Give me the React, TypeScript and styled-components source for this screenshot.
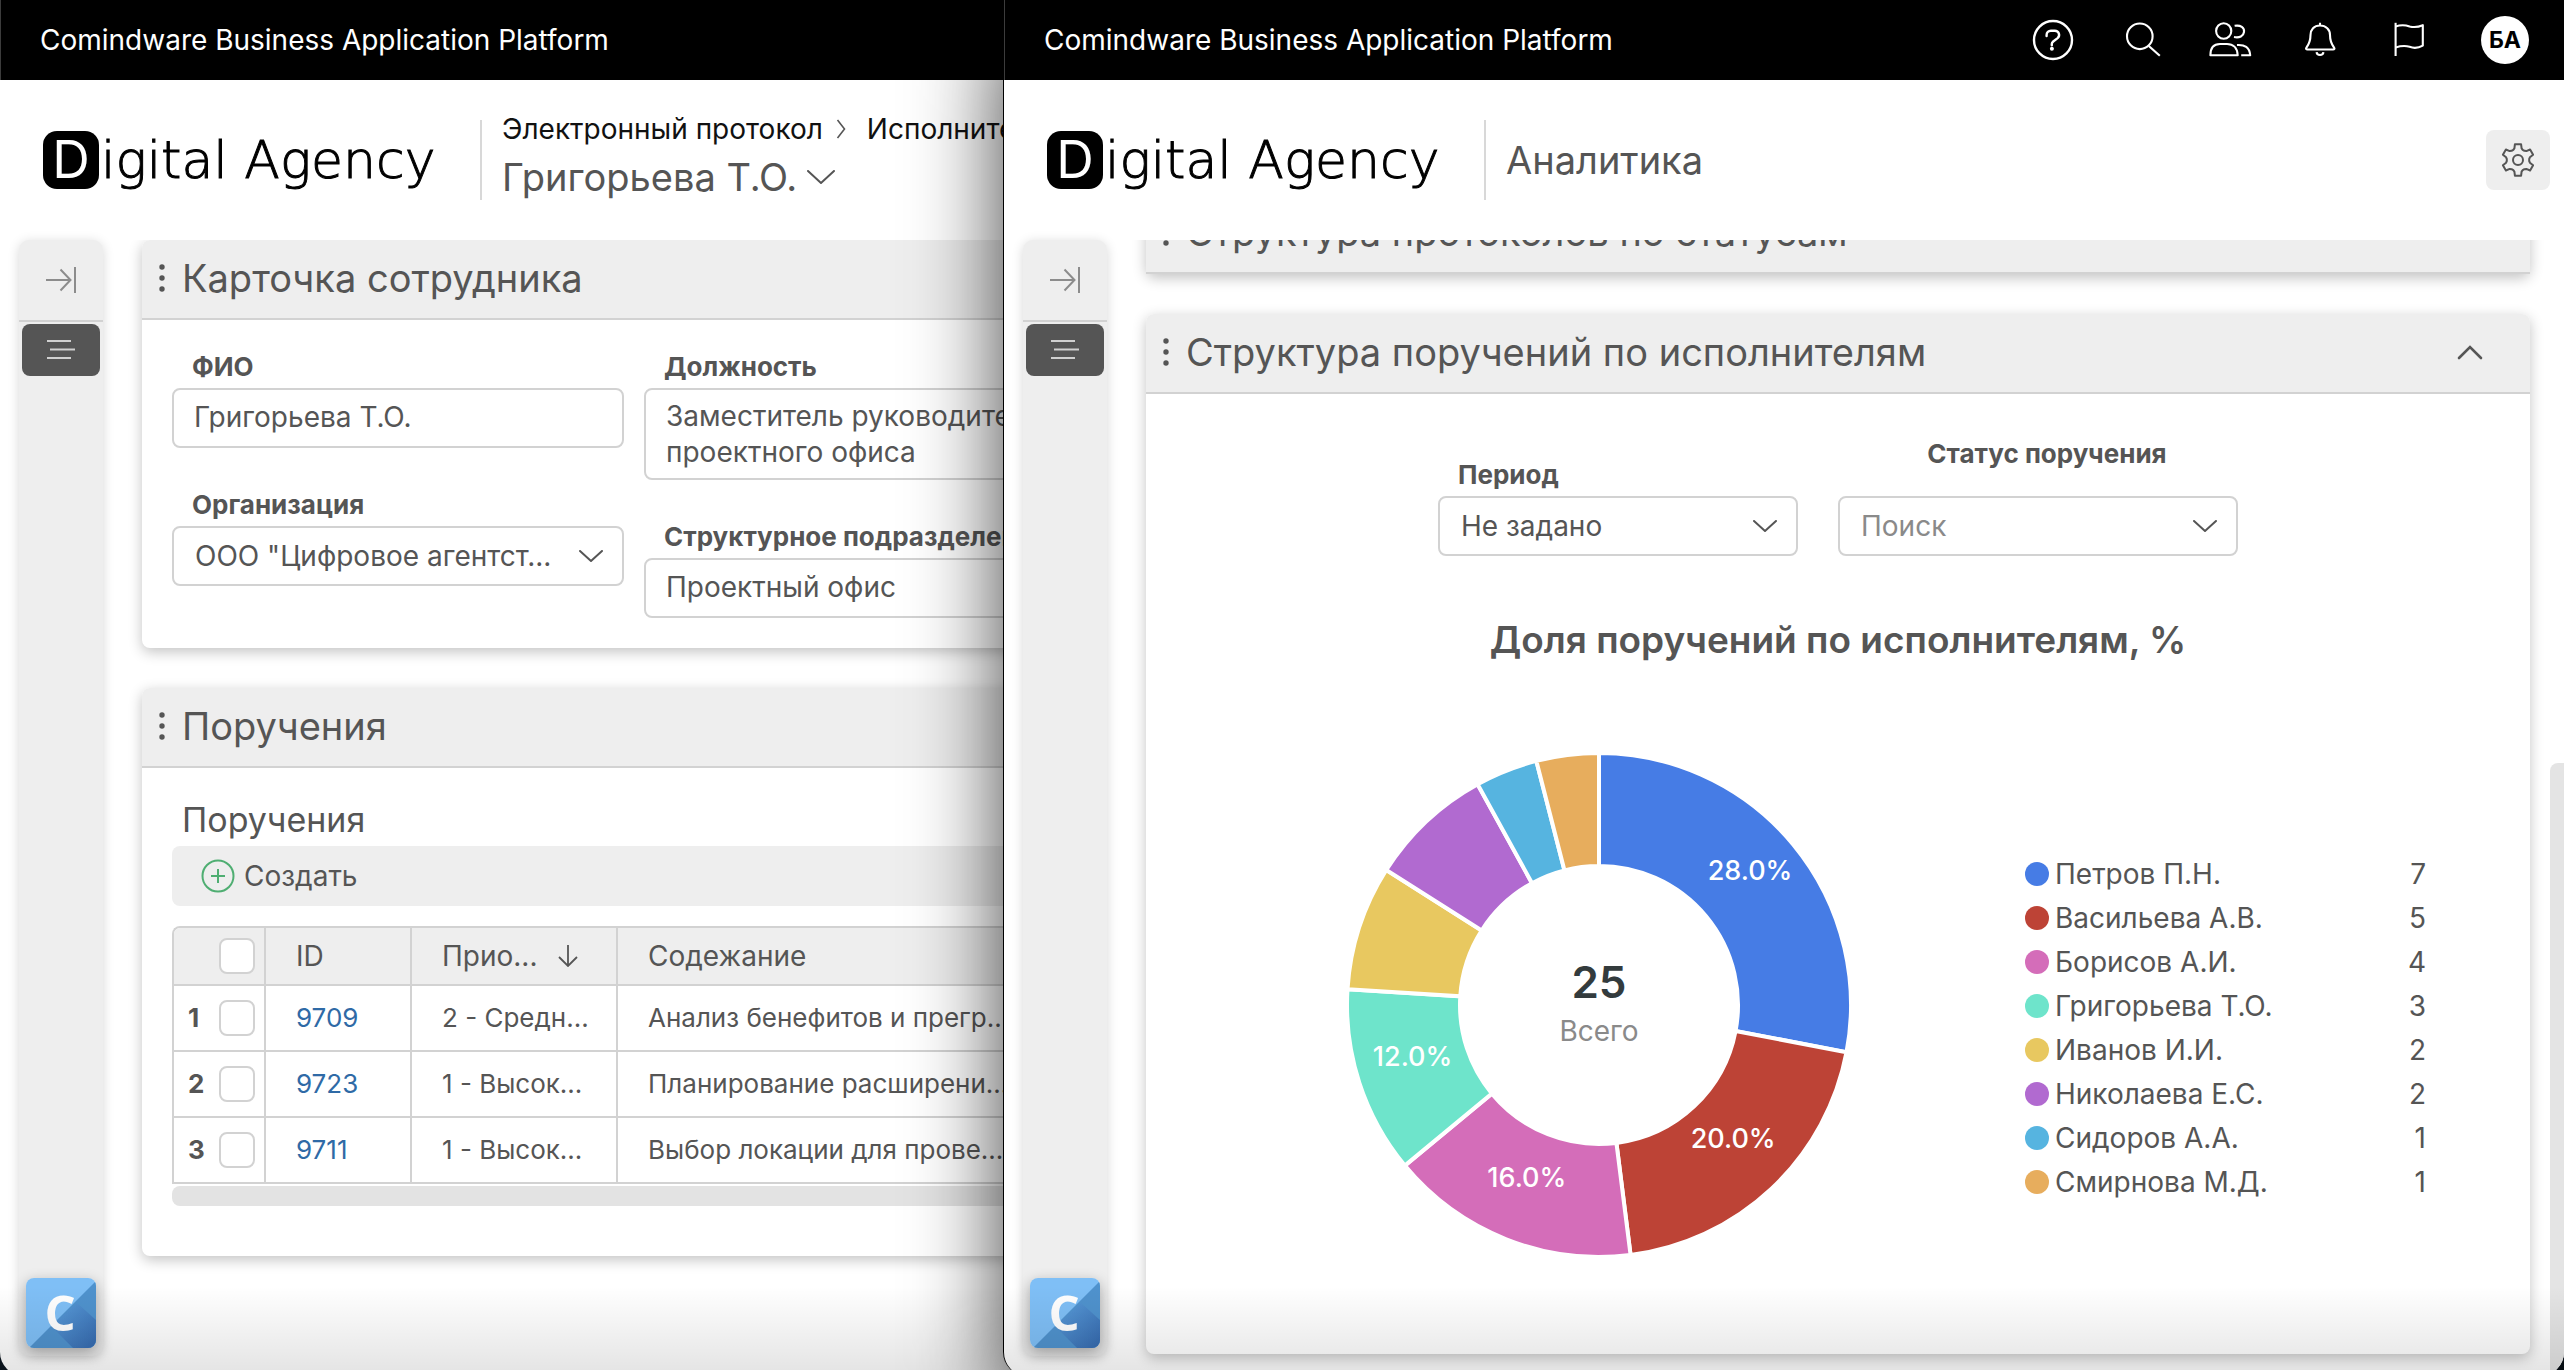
import React, { useId } from 'react';
import styled, { createGlobalStyle, css } from 'styled-components';

/* ---------- theme values ---------- */

const ink = '#555555';
const line = '#d2d2d2';
const panel = '#eeeeee';

const GlobalStyle = createGlobalStyle`
  *, *::before, *::after { box-sizing: border-box; }
  body {
    margin: 0;
    font-family: Inter, "Noto Sans", "Liberation Sans", sans-serif;
    font-size: 28px;
    line-height: 36px;
    color: ${ink};
  }
  h1, h2, h3, p, ul, ol { margin: 0; padding: 0; font-weight: 400; list-style: none; }
  button, input, select, textarea { font: inherit; color: inherit; margin: 0; }
  button { border: 0; padding: 0; background: none; cursor: pointer; }
`;

/* ---------- desktop and windows ---------- */

const Desktop = styled.div`
  position: relative;
  height: 100vh;
  overflow: hidden;
  background: #0b141c;
`;

const Window = styled.section<{ $front?: boolean }>`
  position: absolute;
  top: 0;
  bottom: -6px;
  display: flex;
  flex-direction: column;
  overflow: hidden;
  background: #fff;
  border-radius: 0 0 24px 24px;
  ${({ $front }) =>
    $front
      ? css`
          left: 1003px;
          right: 0;
          border-left: 1px solid #000;
          box-shadow: 0 30px 90px rgba(0, 0, 0, 0.75);
        `
      : css`
          left: 0;
          width: 61%;
        `}

  &::after {
    content: '';
    position: absolute;
    inset: auto 0 0 0;
    height: 90px;
    background: linear-gradient(rgba(0, 0, 0, 0), rgba(0, 0, 0, 0.11));
    pointer-events: none;
  }
`;

const TopBar = styled.header`
  flex: none;
  display: flex;
  align-items: center;
  justify-content: space-between;
  height: 80px;
  padding: 0 35px 0 39px;
  background: #000;
  border-left: 1px solid #3c3c3c;
  color: #fff;
`;

const TopTools = styled.nav`
  display: flex;
  align-items: center;
  gap: 41px;
`;

const ToolButton = styled.button`
  display: block;
  width: 48px;
  height: 48px;
  svg { display: block; }
`;

const Avatar = styled.button`
  width: 48px;
  height: 48px;
  margin-left: 7px;
  border-radius: 50%;
  background: #fff;
  color: #000;
  font-size: 23px;
  font-weight: 700;
`;

const PageHeader = styled.div`
  flex: none;
  display: flex;
  align-items: center;
  height: 160px;
  padding: 0 14px 0 43px;
`;

const Brand = styled.a`
  flex: none;
  display: flex;
  align-items: center;
  gap: 2px;
  width: 437px;
  color: #000;
  text-decoration: none;
`;

const BrandLetter = styled.span`
  display: flex;
  align-items: center;
  justify-content: center;
  width: 56px;
  height: 58px;
  border-radius: 14px;
  background: #000;
  color: #fff;
  font-size: 52px;
  line-height: 56px;
`;

const BrandName = styled.span`
  font-family: "DejaVu Sans", Inter, sans-serif;
  font-weight: 200;
  font-size: 52px;
  line-height: 56px;
  -webkit-text-stroke: 1px #000;
  white-space: nowrap;
`;

const TitleBlock = styled.div<{ $crumbs?: boolean }>`
  flex: 1;
  display: flex;
  flex-direction: column;
  justify-content: center;
  height: 80px;
  padding-left: 20px;
  padding-bottom: ${({ $crumbs }) => ($crumbs ? 6 : 0)}px;
  border-left: 2px solid #d8d8d8;
`;

const Crumbs = styled.nav`
  display: flex;
  align-items: center;
  line-height: 40px;
  white-space: nowrap;
  color: #111;
  a { color: inherit; text-decoration: none; }
  svg { margin: 0 21px 0 13px; }
`;

const PageTitle = styled.h1`
  display: flex;
  align-items: center;
  gap: 10px;
  font-size: 38px;
  line-height: 56px;
`;

const SettingsButton = styled.button`
  display: flex;
  align-items: center;
  justify-content: center;
  width: 64px;
  height: 60px;
  border-radius: 8px;
  background: ${panel};
`;

/* ---------- body ---------- */

const Body = styled.div`
  flex: 1;
  min-height: 0;
  display: flex;
`;

const SideBar = styled.aside`
  flex: none;
  display: flex;
  flex-direction: column;
  align-items: center;
  width: 84px;
  margin: 0 0 20px 19px;
  border-radius: 10px;
  background: ${panel};
  box-shadow: 0 2px 12px rgba(0, 0, 0, 0.16);
`;

const ExpandButton = styled.button`
  width: 100%;
  height: 82px;
  border-bottom: 2px solid ${line};
  svg { display: block; margin: 0 auto; }
`;

const MenuButton = styled.button`
  width: 78px;
  height: 52px;
  margin: 2px 0 auto;
  border-radius: 8px;
  background: ${ink};
  svg { display: block; margin: 0 auto; }
`;

const HomeButton = styled.button`
  width: 70px;
  height: 70px;
  margin-bottom: 8px;
  border-radius: 8px;
  overflow: hidden;
  box-shadow: 0 4px 14px rgba(0, 0, 0, 0.3);
  svg { display: block; }
`;

const Main = styled.main<{ $scrolled?: boolean }>`
  flex: 1;
  min-width: 0;
  overflow: hidden;
  display: flex;
  flex-direction: column;
  gap: 40px;
  padding: 0 20px 0 39px;
  > :first-child { margin-top: ${({ $scrolled }) => ($scrolled ? -46 : 0)}px; }
`;

const ScrollTrack = styled.div`
  flex: none;
  display: flex;
  flex-direction: column;
  justify-content: flex-end;
  width: 14px;
`;

const ScrollThumb = styled.div`
  height: 54%;
  border-radius: 8px 0 0 0;
  background: #e4e4e4;
`;

const Card = styled.section`
  flex: none;
  border-radius: 8px;
  background: #fff;
  box-shadow: 0 4px 14px rgba(0, 0, 0, 0.24);
`;

const CardHead = styled.div`
  display: flex;
  align-items: center;
  gap: 17px;
  height: 80px;
  padding: 0 48px 2px 17px;
  border-bottom: 2px solid ${line};
  border-radius: 8px 8px 0 0;
  background: ${panel};
`;

const CardTitle = styled.h2`
  flex: 1;
  font-size: 38px;
  line-height: 56px;
  white-space: nowrap;
`;

/* ---------- form ---------- */

const FormGrid = styled.div`
  display: grid;
  grid-template-columns: 452px 452px;
  gap: 20px;
  padding: 26px 30px 30px;
`;

const FormColumn = styled.div`
  display: flex;
  flex-direction: column;
  gap: 36px;
`;

const FieldBox = styled.div<{ $width?: number }>`
  display: flex;
  flex-direction: column;
  ${({ $width }) => $width && `width: ${$width}px;`}
`;

const FieldLabel = styled.label<{ $tall?: boolean }>`
  padding-left: ${({ $tall }) => ($tall ? 18 : 20)}px;
  font-size: 26px;
  font-weight: 700;
  line-height: ${({ $tall }) => ($tall ? 84 : 42)}px;
  text-align: ${({ $tall }) => ($tall ? 'center' : 'left')};
  white-space: nowrap;
`;

const control = css`
  display: block;
  width: 100%;
  height: 60px;
  padding: 0 20px 3px;
  border: 2px solid ${line};
  border-radius: 8px;
  background: #fff;
  outline: none;
`;

const TextInput = styled.input`
  ${control}
`;

const TextArea = styled.textarea`
  ${control}
  height: 92px;
  padding: 8px 20px;
  overflow: hidden;
  resize: none;
`;

const SelectWrap = styled.div`
  display: grid;
  align-items: center;
  > * { grid-area: 1 / 1; }
  > svg { justify-self: end; margin-right: 21px; pointer-events: none; }
`;

const Select = styled.select<{ $muted?: boolean }>`
  ${control}
  padding: 0 56px 0 21px;
  appearance: none;
  color: ${({ $muted }) => ($muted ? '#8a8a8a' : ink)};
`;

/* ---------- table ---------- */

const TaskArea = styled.div`
  padding: 34px 30px 50px;
`;

const AreaTitle = styled.h3`
  padding: 0 0 8px 10px;
  font-size: 34px;
  line-height: 36px;
`;

const ActionBar = styled.div`
  display: flex;
  align-items: center;
  height: 60px;
  margin-bottom: 20px;
  padding-left: 29px;
  border-radius: 8px;
  background: ${panel};
`;

const CreateButton = styled.button`
  display: flex;
  align-items: center;
  gap: 9px;
`;

const TableFrame = styled.div`
  overflow: hidden;
  border: 2px solid ${line};
  border-width: 2px 0 0 2px;
  border-radius: 8px 0 0 0;
`;

const Table = styled.table`
  width: 100%;
  table-layout: fixed;
  border-collapse: separate;
  border-spacing: 0;
  font-size: 26px;

  th, td {
    height: 66px;
    padding: 0 0 0 30px;
    border: 2px solid ${line};
    border-width: 0 2px 2px 0;
    font-weight: 400;
    text-align: left;
    white-space: nowrap;
    overflow: hidden;
  }
  thead th {
    height: 58px;
    background: ${panel};
    font-size: 28px;
  }
  a { color: #2f6aa6; text-decoration: none; }
`;

const Col = styled.col<{ $width?: number }>`
  width: ${({ $width }) => ($width ? `${$width}px` : 'auto')};
`;

const SortLabel = styled.span`
  display: flex;
  align-items: center;
  gap: 20px;
`;

const RowMark = styled.div`
  display: flex;
  align-items: center;
  justify-content: space-between;
  margin-left: -16px;
  padding-right: 9px;
  font-weight: 700;
`;

const Check = styled.input`
  appearance: none;
  width: 36px;
  height: 36px;
  margin-left: auto;
  border: 2px solid ${line};
  border-radius: 8px;
  background: #fff;
`;

const HorizontalScroll = styled.div`
  height: 20px;
  margin-top: 2px;
  border-radius: 8px;
  background: #e3e3e3;
`;

/* ---------- analytics ---------- */

const Filters = styled.div`
  display: flex;
  align-items: flex-end;
  justify-content: center;
  gap: 40px;
  padding-top: 18px;
`;

const ChartTitle = styled.h3`
  margin: 60px 0 90px;
  font-size: 37px;
  font-weight: 600;
  line-height: 48px;
  text-align: center;
`;

const ChartRow = styled.div`
  display: flex;
  align-items: flex-start;
  justify-content: center;
  gap: 175px;
  padding: 0 0 98px 98px;
  > svg { display: block; }
`;

const Legend = styled.ul`
  width: 401px;
  margin-top: 98px;
`;

const LegendItem = styled.li`
  display: flex;
  align-items: center;
  gap: 6px;
  line-height: 44px;
  > :last-child { margin-left: auto; }
`;

const Dot = styled.span<{ $color: string }>`
  width: 24px;
  height: 24px;
  border-radius: 50%;
  background: ${({ $color }) => $color};
`;

const SliceLabel = styled.text`
  fill: #fff;
  font-size: 27px;
  font-weight: 500;
  text-anchor: middle;
`;

const TotalValue = styled(SliceLabel)`
  fill: #333b3d;
  font-size: 44px;
  font-weight: 600;
`;

const TotalCaption = styled(SliceLabel)`
  fill: #8a8a8a;
  font-size: 28px;
  font-weight: 400;
`;

/* ---------- icons ---------- */

type IconProps = { width?: number; children: React.ReactNode };

const BarIcon = ({ children, width = 2.1 }: IconProps) => (
  <svg width="48" height="48" viewBox="0 0 48 48" fill="none" stroke="#fff" strokeWidth={width} strokeLinejoin="round">
    {children}
  </svg>
);

const HelpIcon = () => (
  <BarIcon width={2.4}>
    <circle cx="24" cy="24" r="19" />
    <path d="M17.6 20v-1a4.3 4.3 0 0 1 4.3-4.3h4a4.2 4.2 0 0 1 2.7 7.4l-4.4 3.4q-1.4 1.2-1.4 2.6v1.1" strokeLinecap="round" />
    <circle cx="22.9" cy="32.8" r="2" fill="#fff" stroke="none" />
  </BarIcon>
);

const SearchIcon = () => (
  <BarIcon>
    <circle cx="21.8" cy="20.3" r="12.8" />
    <path d="M30.8 30l11 9.8" />
  </BarIcon>
);

const UsersIcon = () => (
  <BarIcon>
    <ellipse cx="16.7" cy="15" rx="7.6" ry="7.8" />
    <path d="M27.6 9.8c6-1 10.1 1.7 9.4 6.2-.5 4-4.5 6.200-10 5" />
    <path d="M3.400 39.300C3.400 31.700 7.200 28 13 28h7c5.900 0 10.400 3.700 10.700 11.300z" />
    <path d="M30 29c7.600-.6 12.600 2.400 13.200 10.300h-9" />
  </BarIcon>
);

const BellIcon = () => (
  <BarIcon>
    <path d="M24 6.800v2.700c-6 0-9.500 4-9.500 9.500 0 6-1 8.500-4 12.500-1 1.200-.3 2 1 2h25.500c1.300 0 2-.8 1-2-3-4-4-6.500-4-12.500 0-5.500-4-9.500-10-9.500" />
    <path d="M20.600 36.200c.3 3.800 6.500 3.800 6.800 0" />
  </BarIcon>
);

const FlagIcon = () => (
  <BarIcon>
    <path d="M10.600 6.800v33.200" />
    <path d="M10.600 10.400c6-2 9.400-1.600 14 0 4.600 1.200 8 1 13.200-1.200v20.400c-5 2.800-8.600 3-13.200 1.200-4.600-1.400-8-1.200-14 .6" />
  </BarIcon>
);

const gearPath = (() => {
  const points: string[] = [];
  for (let tooth = 0; tooth < 6; tooth += 1) {
    const corners: [number, number][] = [[-25, 11.2], [-17, 12.2], [-11, 16], [11, 16], [17, 12.2], [25, 11.2]];
    corners.forEach(([offset, radius]) => {
      const angle = ((tooth * 60 + offset - 90) * Math.PI) / 180;
      points.push(`${(18 + radius * Math.cos(angle)).toFixed(1)} ${(18 + radius * Math.sin(angle)).toFixed(1)}`);
    });
  }
  return `M${points.join('L')}Z`;
})();

const GearIcon = () => (
  <svg width="36" height="36" viewBox="0 0 36 36" fill="none" stroke={ink} strokeWidth="2" strokeLinejoin="round">
    <path d={gearPath} />
    <circle cx="18" cy="18" r="5" />
  </svg>
);

const Chevron = ({ w = 22, h = 10, up, width = 2 }: { w?: number; h?: number; up?: boolean; width?: number }) => (
  <svg width={w + 2} height={h + 2} viewBox={`-1 -1 ${w + 2} ${h + 2}`} fill="none" stroke={ink} strokeWidth={width} strokeLinecap="round">
    <path d={up ? `M0 ${h}L${w / 2} 0L${w} ${h}` : `M0 0L${w / 2} ${h}L${w} 0`} />
  </svg>
);

const FoldButton = styled.button`
  display: block;
  svg { display: block; overflow: visible; }
`;

const CrumbArrow = () => (
  <svg width="10" height="20" viewBox="0 0 10 20" fill="none" stroke={ink} strokeWidth="1.6">
    <path d="M1.5 1L8.5 10L1.5 19" />
  </svg>
);

const ExpandIcon = () => (
  <svg width="32" height="28" viewBox="0 0 32 28" fill="none" stroke="#8c8c8c" strokeWidth="2">
    <path d="M1 14h24M15.5 3.5L25.5 14L15.5 24.5M30 1v26" />
  </svg>
);

const MenuIcon = () => (
  <svg width="30" height="22" viewBox="0 0 30 22" fill="none" stroke="#d0d0d0" strokeWidth="2">
    <path d="M1 2h24M4 10.500h25M1 19h24" />
  </svg>
);

const Grip = () => (
  <svg width="6" height="28" viewBox="0 0 6 28" fill={ink}>
    {[3, 14, 25].map((y) => (
      <circle key={y} cx="3" cy={y} r="2.7" />
    ))}
  </svg>
);

const PlusIcon = () => (
  <svg width="34" height="34" viewBox="0 0 34 34" fill="none" stroke="#4fae72" strokeWidth="2">
    <circle cx="17" cy="17" r="15.5" />
    <path d="M10 17h14M17 10v14" />
  </svg>
);

const SortIcon = () => (
  <svg width="20" height="22" viewBox="0 0 20 22" fill="none" stroke={ink} strokeWidth="1.8">
    <path d="M10 0v20M1 12l9 9l9-9" />
  </svg>
);

const HomeLogo = () => {
  const id = useId();
  return (
    <svg width="70" height="70" viewBox="0 0 70 70">
      <defs>
        <linearGradient id={id} x1="0" y1="0" x2="1" y2="1">
          <stop offset="0" stopColor="#5b9fdc" />
          <stop offset="1" stopColor="#3569ae" />
        </linearGradient>
      </defs>
      <rect width="70" height="70" fill="#7fbff6" />
      <path d="M70 3L3 70H70z" fill="#4f92cd" />
      <path d="M51 25L70 42V70H47L25 48z" fill={`url(#${id})`} />
      <text x="34" y="53" textAnchor="middle" fill="#fff" fontFamily="Open Sans, Noto Sans, sans-serif" fontSize="49" fontWeight="700">
        C
      </text>
    </svg>
  );
};

/* ---------- data ---------- */

const tasks = [
  { id: '9709', priority: '2 - Средн...', text: 'Анализ бенефитов и прегр...' },
  { id: '9723', priority: '1 - Высок...', text: 'Планирование расширени...' },
  { id: '9711', priority: '1 - Высок...', text: 'Выбор локации для прове...' },
];

const people = [
  { name: 'Петров П.Н.', count: 7, color: '#467ce5' },
  { name: 'Васильева А.В.', count: 5, color: '#bd4336' },
  { name: 'Борисов А.И.', count: 4, color: '#d46db9' },
  { name: 'Григорьева Т.О.', count: 3, color: '#6ee4cb' },
  { name: 'Иванов И.И.', count: 2, color: '#e8c860' },
  { name: 'Николаева Е.С.', count: 2, color: '#b16ad0' },
  { name: 'Сидоров А.А.', count: 1, color: '#56b4e0' },
  { name: 'Смирнова М.Д.', count: 1, color: '#e7ad5d' },
];

/* ---------- parts ---------- */

const Logo = () => (
  <Brand href="#home">
    <BrandLetter>D</BrandLetter>
    <BrandName>igital Agency</BrandName>
  </Brand>
);

const Side = () => (
  <SideBar>
    <ExpandButton aria-label="Развернуть"><ExpandIcon /></ExpandButton>
    <MenuButton aria-label="Меню"><MenuIcon /></MenuButton>
    <HomeButton aria-label="Главная"><HomeLogo /></HomeButton>
  </SideBar>
);

const PanelHead = ({ title, fold }: { title: string; fold?: boolean }) => (
  <CardHead>
    <Grip />
    <CardTitle>{title}</CardTitle>
    {fold && <FoldButton aria-label="Свернуть"><Chevron up h={11} width={2.6} /></FoldButton>}
  </CardHead>
);

type FieldProps = { label: string; value: string; kind?: 'text' | 'area' | 'select'; width?: number; tall?: boolean; muted?: boolean };

const Field = ({ label, value, kind = 'text', width, tall, muted }: FieldProps) => {
  const id = useId();
  return (
    <FieldBox $width={width}>
      <FieldLabel htmlFor={id} $tall={tall}>{label}</FieldLabel>
      {kind === 'text' && <TextInput id={id} defaultValue={value} />}
      {kind === 'area' && <TextArea id={id} defaultValue={value} />}
      {kind === 'select' && (
        <SelectWrap>
          <Select id={id} $muted={muted}><option>{value}</option></Select>
          <Chevron />
        </SelectWrap>
      )}
    </FieldBox>
  );
};

const Donut = () => {
  const total = people.reduce((sum, p) => sum + p.count, 0);
  const c = 251;
  const outer = 252;
  const inner = 139;
  const at = (share: number, r: number) => {
    const a = share * 2 * Math.PI;
    return [c + r * Math.sin(a), c - r * Math.cos(a)] as const;
  };
  let start = 0;
  const slices = people.map((p) => {
    const from = start;
    const to = start + p.count / total;
    start = to;
    return {
      ...p,
      d: `M${at(from, outer).join(' ')}A${outer} ${outer} 0 0 1 ${at(to, outer).join(' ')}L${at(to, inner).join(' ')}A${inner} ${inner} 0 0 0 ${at(from, inner).join(' ')}Z`,
      mid: at((from + to) / 2, 196),
    };
  });
  return (
    <svg width="502" height="502" viewBox="0 0 502 502" role="img" aria-label="Доля поручений по исполнителям">
      {slices.map((s) => (
        <path key={s.name} d={s.d} fill={s.color} stroke="#fff" strokeWidth="4" />
      ))}
      {slices.filter((s) => s.count > 2).map((s) => (
        <SliceLabel key={s.name} x={s.mid[0]} y={s.mid[1]}>{((s.count / total) * 100).toFixed(1)}%</SliceLabel>
      ))}
      <TotalValue x={c} y="244">{total}</TotalValue>
      <TotalCaption x={c} y="287">Всего</TotalCaption>
    </svg>
  );
};

/* ---------- windows ---------- */

const EmployeeWindow = () => (
  <Window>
    <TopBar>Comindware Business Application Platform</TopBar>
    <PageHeader>
      <Logo />
      <TitleBlock $crumbs>
        <Crumbs>
          <a href="#protocol">Электронный протокол</a>
          <CrumbArrow />
          <a href="#assignees">Исполнители</a>
        </Crumbs>
        <PageTitle>Григорьева Т.О.<Chevron w={26} h={12} /></PageTitle>
      </TitleBlock>
    </PageHeader>
    <Body>
      <Side />
      <Main>
        <Card>
          <PanelHead title="Карточка сотрудника" />
          <FormGrid>
            <FormColumn>
              <Field label="ФИО" value="Григорьева Т.О." />
              <Field label="Организация" value={'ООО "Цифровое агентст...'} kind="select" />
            </FormColumn>
            <FormColumn>
              <Field label="Должность" value="Заместитель руководителя проектного офиса" kind="area" />
              <Field label="Структурное подразделение" value="Проектный офис" />
            </FormColumn>
          </FormGrid>
        </Card>
        <Card>
          <PanelHead title="Поручения" />
          <TaskArea>
            <AreaTitle>Поручения</AreaTitle>
            <ActionBar>
              <CreateButton><PlusIcon />Создать</CreateButton>
            </ActionBar>
            <TableFrame>
              <Table>
                <colgroup>
                  <Col $width={92} />
                  <Col $width={146} />
                  <Col $width={206} />
                  <Col $width={420} />
                  <Col />
                </colgroup>
                <thead>
                  <tr>
                    <th><RowMark><Check type="checkbox" aria-label="Выбрать все" /></RowMark></th>
                    <th>ID</th>
                    <th><SortLabel>Прио...<SortIcon /></SortLabel></th>
                    <th>Содежание</th>
                    <th />
                  </tr>
                </thead>
                <tbody>
                  {tasks.map((task, index) => (
                    <tr key={task.id}>
                      <td><RowMark>{index + 1}<Check type="checkbox" aria-label={`Выбрать ${task.id}`} /></RowMark></td>
                      <td><a href={`#${task.id}`}>{task.id}</a></td>
                      <td>{task.priority}</td>
                      <td>{task.text}</td>
                      <td />
                    </tr>
                  ))}
                </tbody>
              </Table>
            </TableFrame>
            <HorizontalScroll />
          </TaskArea>
        </Card>
      </Main>
    </Body>
  </Window>
);

const AnalyticsWindow = () => (
  <Window $front>
    <TopBar>
      Comindware Business Application Platform
      <TopTools>
        <ToolButton aria-label="Справка"><HelpIcon /></ToolButton>
        <ToolButton aria-label="Поиск"><SearchIcon /></ToolButton>
        <ToolButton aria-label="Пользователи"><UsersIcon /></ToolButton>
        <ToolButton aria-label="Уведомления"><BellIcon /></ToolButton>
        <ToolButton aria-label="Задачи"><FlagIcon /></ToolButton>
        <Avatar>БА</Avatar>
      </TopTools>
    </TopBar>
    <PageHeader>
      <Logo />
      <TitleBlock><PageTitle>Аналитика</PageTitle></TitleBlock>
      <SettingsButton aria-label="Настройки"><GearIcon /></SettingsButton>
    </PageHeader>
    <Body>
      <Side />
      <Main $scrolled>
        <Card><PanelHead title="Структура протоколов по статусам" fold /></Card>
        <Card>
          <PanelHead title="Структура поручений по исполнителям" fold />
          <Filters>
            <Field label="Период" value="Не задано" kind="select" width={360} />
            <Field label="Статус поручения" value="Поиск" kind="select" width={400} tall muted />
          </Filters>
          <ChartTitle>Доля поручений по исполнителям, %</ChartTitle>
          <ChartRow>
            <Donut />
            <Legend>
              {people.map((p) => (
                <LegendItem key={p.name}>
                  <Dot $color={p.color} />
                  <span>{p.name}</span>
                  <span>{p.count}</span>
                </LegendItem>
              ))}
            </Legend>
          </ChartRow>
        </Card>
      </Main>
      <ScrollTrack><ScrollThumb /></ScrollTrack>
    </Body>
  </Window>
);

export default function App() {
  return (
    <>
      <GlobalStyle />
      <Desktop>
        <EmployeeWindow />
        <AnalyticsWindow />
      </Desktop>
    </>
  );
}
